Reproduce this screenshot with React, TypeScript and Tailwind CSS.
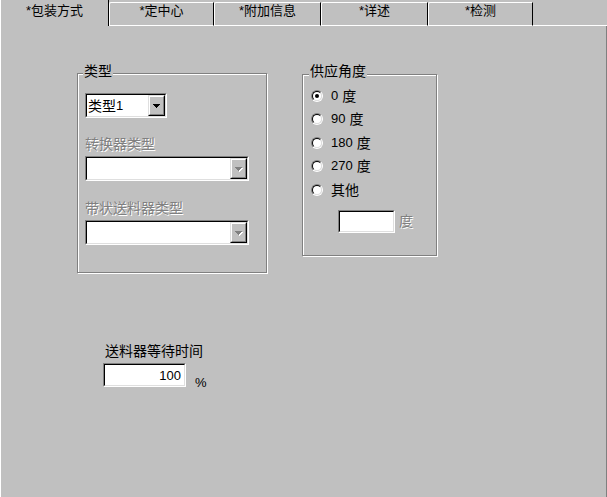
import React from "react";

function Arrow({ disabled }: { disabled?: boolean }) {
  const c = disabled ? "#808080" : "#000000";
  return (
    <svg width="8" height="5" viewBox="0 0 8 5" shapeRendering="crispEdges">
      {disabled && (
        <g fill="#ffffff">
          <rect x="1" y="1" width="7" height="1" />
          <rect x="2" y="2" width="5" height="1" />
          <rect x="3" y="3" width="3" height="1" />
          <rect x="4" y="4" width="1" height="1" />
        </g>
      )}
      <g fill={c}>
        <rect x="0" y="0" width="7" height="1" />
        <rect x="1" y="1" width="5" height="1" />
        <rect x="2" y="2" width="3" height="1" />
        <rect x="3" y="3" width="1" height="1" />
      </g>
    </svg>
  );
}

function Combo({ w, disabled, children }: { w: string; disabled?: boolean; children?: React.ReactNode }) {
  return (
    <div className={`${w} h-[25px] flex border border-t-[#808080] border-l-[#808080] border-b-white border-r-white`}>
      <div className="flex-1 flex border border-t-black border-l-black border-b-[#dfdfdf] border-r-[#dfdfdf] bg-white">
        <div className="flex-1 flex items-center pl-[1px] text-black">{children}</div>
        <div className="w-[17px] flex border border-t-[#dfdfdf] border-l-[#dfdfdf] border-b-black border-r-black bg-[#c0c0c0]">
          <div className="flex-1 flex items-center justify-center pt-[1px] border border-t-white border-l-white border-b-[#808080] border-r-[#808080]">
            <Arrow disabled={disabled} />
          </div>
        </div>
      </div>
    </div>
  );
}

function Edit({ w, h, children }: { w: string; h: string; children?: React.ReactNode }) {
  return (
    <div className={`${w} ${h} flex border border-t-[#808080] border-l-[#808080] border-b-white border-r-white`}>
      <div className="flex-1 flex items-center justify-end pr-[3px] border border-t-black border-l-black border-b-[#dfdfdf] border-r-[#dfdfdf] bg-white">
        {children}
      </div>
    </div>
  );
}

function Radio({ checked }: { checked?: boolean }) {
  return (
    <div className="w-[12px] h-[12px] shrink-0 flex rounded-full border border-t-[#808080] border-l-[#808080] border-b-white border-r-white">
      <div className="flex-1 flex items-center justify-center rounded-full border border-t-black border-l-black border-b-[#dfdfdf] border-r-[#dfdfdf] bg-white">
        {checked && <div className="w-[4px] h-[4px] rounded-full bg-black" />}
      </div>
    </div>
  );
}

const tabs = [
  { label: "*定中心", w: "w-[105px]" },
  { label: "*附加信息", w: "w-[107px]" },
  { label: "*详述", w: "w-[107px]" },
  { label: "*检测", w: "w-[105px]" },
];

const angles: { n: string; u: string; checked?: boolean }[] = [
  { n: "0", u: "度", checked: true },
  { n: "90", u: "度" },
  { n: "180", u: "度" },
  { n: "270", u: "度" },
  { n: "", u: "其他" },
];

export default function App() {
  return (
    <div className="w-[607px] h-[497px] bg-[#c0c0c0] flex flex-col overflow-hidden text-black text-[14px] leading-[18px] font-['Liberation_Sans','Noto_Sans_CJK_SC',sans-serif]">
      {/* tab strip */}
      <div className="flex h-[26px] shrink-0">
        <div className="w-[109px] h-[26px] border-l border-l-white border-r border-r-black flex justify-center pt-[3px] text-[13px] leading-[16px]">
          *包装方式
        </div>
        {tabs.map((t) => (
          <div
            key={t.label}
            className={`${t.w} mt-[2px] h-[24px] border-t border-l border-b border-t-white border-l-white border-b-white border-r border-r-black rounded-tl-[2px] flex justify-center text-[13px] leading-[16px]`}
          >
            {t.label}
          </div>
        ))}
        <div className="flex-1 h-[26px] border-b border-b-white" />
      </div>

      {/* page */}
      <div className="flex-1 border-l border-l-white border-r border-r-[#808080] flex flex-col">
        <div className="flex items-start pt-[47px]">
          {/* 类型 group */}
          <div className="relative ml-[76px] w-[190px] h-[200px] shrink-0 border border-[#808080] shadow-[inset_1px_1px_0_#fff,1px_1px_0_#fff] flex flex-col pl-[7px] pt-[19px]">
            <span className="absolute left-[5px] -top-[12px] px-[1px] bg-[#c0c0c0]">类型</span>
            <Combo w="w-[82px]">
              <span>类型</span>
              <span className="text-[13px]">1</span>
            </Combo>
            <div className="mt-[17px] text-[#808080] [text-shadow:1px_1px_0_#fff]">转换器类型</div>
            <div className="mt-[3px]">
              <Combo w="w-[164px]" disabled />
            </div>
            <div className="mt-[18px] text-[#808080] [text-shadow:1px_1px_0_#fff]">带状送料器类型</div>
            <div className="mt-[3px]">
              <Combo w="w-[164px]" disabled />
            </div>
          </div>

          {/* 供应角度 group */}
          <div className="relative ml-[35px] mt-[1px] w-[135px] h-[182px] shrink-0 border border-[#808080] shadow-[inset_1px_1px_0_#fff,1px_1px_0_#fff] flex flex-col pl-[8px] pt-[9px]">
            <span className="absolute left-[6px] -top-[13px] px-[1px] bg-[#c0c0c0]">供应角度</span>
            {angles.map((a) => (
              <div key={a.u + a.n} className="h-[23.5px] flex items-center gap-[8px]">
                <Radio checked={a.checked} />
                <span className="flex items-center">
                  {a.n && <span className="text-[13px] mr-[4px]">{a.n}</span>}
                  <span>{a.u}</span>
                </span>
              </div>
            ))}
            <div className="mt-[8px] ml-[27px] flex items-center gap-[4px]">
              <Edit w="w-[57px]" h="h-[23px]" />
              <span className="text-[#808080] [text-shadow:1px_1px_0_#fff]">度</span>
            </div>
          </div>
        </div>

        {/* 送料器等待时间 */}
        <div className="mt-[69px] ml-[104px]">送料器等待时间</div>
        <div className="mt-[3px] ml-[102px] flex items-start">
          <Edit w="w-[83px]" h="h-[24px]">
            <span className="text-[13px] leading-[15px]">100</span>
          </Edit>
          <span className="ml-[9px] mt-[12px] text-[13px] leading-[15px]">%</span>
        </div>
      </div>
    </div>
  );
}
